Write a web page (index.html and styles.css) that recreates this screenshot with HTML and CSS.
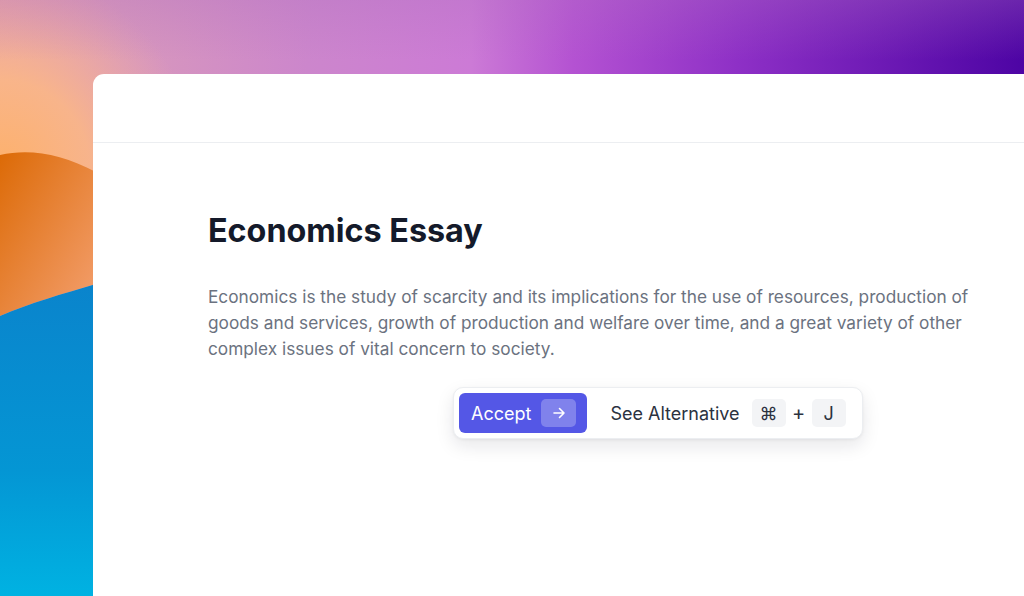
FILE: index.html
```html
<!DOCTYPE html>
<html lang="en">
<head>
<meta charset="utf-8">
<title>Economics Essay</title>
<link rel="stylesheet" href="styles.css">
</head>
<body>
<svg class="wallpaper" width="1024" height="596" viewBox="0 0 1024 596" aria-hidden="true">
  <defs>
    <linearGradient id="band" x1="0" y1="0" x2="1" y2="0">
      <stop offset="0" stop-color="#e8a4a8"/>
      <stop offset="0.12" stop-color="#d898bc"/>
      <stop offset="0.3" stop-color="#cc86cc"/>
      <stop offset="0.46" stop-color="#cc7ad6"/>
      <stop offset="0.56" stop-color="#b452d2"/>
      <stop offset="0.72" stop-color="#8e30c6"/>
      <stop offset="1" stop-color="#4d04a4"/>
    </linearGradient>
    <radialGradient id="glow" cx="0" cy="170" r="200" gradientUnits="userSpaceOnUse">
      <stop offset="0" stop-color="#fdb06a"/>
      <stop offset="0.45" stop-color="#fcb884" stop-opacity="0.85"/>
      <stop offset="1" stop-color="#f4b0a0" stop-opacity="0"/>
    </radialGradient>
    <linearGradient id="topTint" x1="0" y1="0" x2="0" y2="1">
      <stop offset="0" stop-color="#b070c0" stop-opacity="0.3"/>
      <stop offset="1" stop-color="#b070c0" stop-opacity="0"/>
    </linearGradient>
    <linearGradient id="hill" x1="0" y1="0" x2="1" y2="1">
      <stop offset="0" stop-color="#dc6a06"/>
      <stop offset="1" stop-color="#f4a070"/>
    </linearGradient>
    <linearGradient id="sea" x1="0" y1="0" x2="0" y2="1">
      <stop offset="0" stop-color="#0a84cc"/>
      <stop offset="0.6" stop-color="#0496d4"/>
      <stop offset="1" stop-color="#00b2e2"/>
    </linearGradient>
  </defs>
  <rect width="1024" height="596" fill="url(#band)"/>
  <rect width="400" height="300" fill="url(#glow)"/>
  <rect width="1024" height="60" fill="url(#topTint)"/>
  <path d="M0 155 C30 148 62 154 96 172 L96 284 C62 294 30 303 0 316 Z" fill="url(#hill)"/>
  <path d="M0 316 C30 303 62 294 96 284 L96 596 L0 596 Z" fill="url(#sea)"/>
</svg>

<main class="window">
  <header class="window-header"></header>
  <section class="doc">
    <h1 class="doc-title">Economics Essay</h1>
    <p class="doc-text">Economics is the study of scarcity and its implications for the use of resources, production of goods and services, growth of production and welfare over time, and a great variety of other complex issues of vital concern to society.</p>
    <div class="suggest">
      <button class="btn-accept">
        <span>Accept</span>
        <span class="accept-key">
          <svg width="16" height="16" viewBox="0 0 16 16" fill="none" stroke="#fff" stroke-width="1.6" stroke-linecap="round" stroke-linejoin="round"><path d="M3 8h10M8.5 3.5 13 8l-4.5 4.5"/></svg>
        </span>
      </button>
      <button class="btn-alt">
        <span class="alt-label">See Alternative</span>
        <kbd class="key">⌘</kbd>
        <span class="plus">+</span>
        <kbd class="key">J</kbd>
      </button>
    </div>
  </section>
</main>
</body>
</html>
```

FILE: styles.css
```css
* { box-sizing: border-box; }

html, body {
  margin: 0;
  width: 1024px;
  height: 596px;
  overflow: hidden;
}

body {
  position: relative;
  font-family: "Inter", "Liberation Sans", sans-serif;
  background: #c97ad0;
}

.wallpaper {
  position: absolute;
  left: 0;
  top: 0;
  z-index: 0;
}

.window {
  position: relative;
  z-index: 1;
  margin: 74px 0 0 93px;
  height: 522px;
  background: #fff;
  border-top-left-radius: 11px;
}

.window-header {
  height: 69px;
  border-bottom: 1px solid #eceef1;
}

.doc {
  padding: 68px 0 0 115px;
}

.doc-title {
  margin: 0;
  font-size: 32.3px;
  font-weight: 700;
  letter-spacing: 0;
  color: #141a2a;
  line-height: 40px;
}

.doc-text {
  margin: 33px 0 0;
  width: 800px;
  font-size: 17.25px;
  line-height: 26px;
  color: #6b7280;
}

.suggest {
  display: inline-flex;
  align-items: center;
  gap: 5px;
  margin: 25px 0 0 245px;
  padding: 5px;
  background: #fff;
  border: 1px solid #eceef1;
  border-radius: 10px;
  box-shadow: 0 7px 18px rgba(17, 24, 39, 0.1), 0 1px 3px rgba(17, 24, 39, 0.05);
}

.btn-accept {
  display: flex;
  align-items: center;
  gap: 10px;
  height: 40px;
  padding: 0 11px 0 12px;
  border: 0;
  border-radius: 6px;
  background: #5457e6;
  color: #fff;
  font-family: inherit;
  font-size: 18px;
}

.accept-key {
  display: flex;
  align-items: center;
  justify-content: center;
  width: 35px;
  height: 28px;
  border-radius: 5px;
  background: rgba(255, 255, 255, 0.26);
}

.btn-alt {
  display: flex;
  align-items: center;
  height: 40px;
  padding: 0 11px 0 18px;
  border: 0;
  border-radius: 6px;
  background: #fff;
  color: #2b3240;
  font-family: inherit;
  font-size: 18px;
}

.alt-label {
  margin-right: 12px;
}

.key {
  display: flex;
  align-items: center;
  justify-content: center;
  width: 34px;
  height: 28px;
  border-radius: 5px;
  background: #f3f4f6;
  font-family: inherit;
  font-size: 18px;
  color: #2b3240;
}

.plus {
  width: 26px;
  text-align: center;
  font-size: 20px;
}
```
